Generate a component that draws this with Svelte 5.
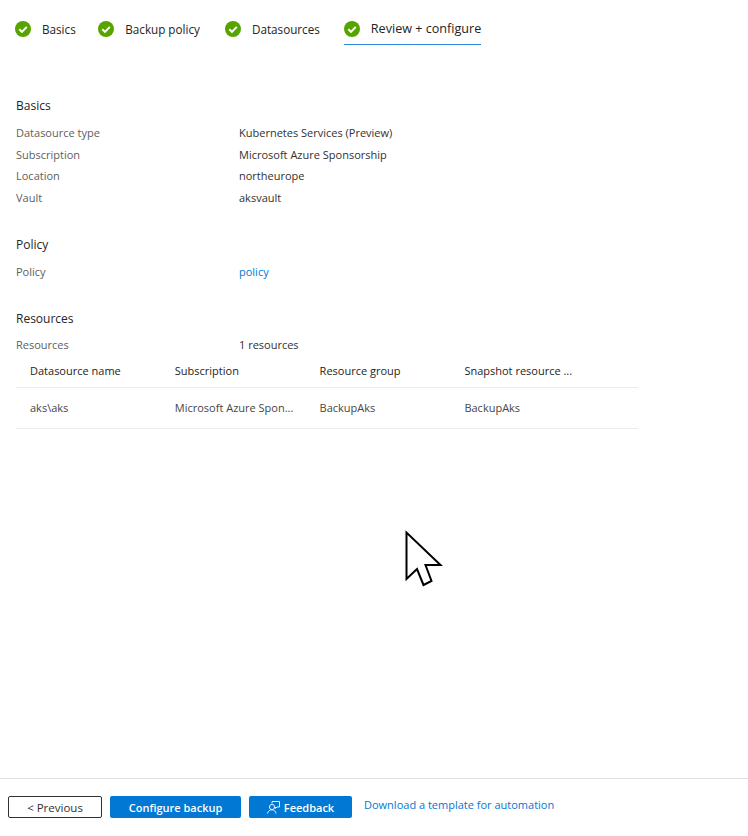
<script>
	const steps = ["Basics", "Backup policy", "Datasources", "Review + configure"];

	const basics = [
		{ label: "Datasource type", value: "Kubernetes Services (Preview)" },
		{ label: "Subscription", value: "Microsoft Azure Sponsorship" },
		{ label: "Location", value: "northeurope" },
		{ label: "Vault", value: "aksvault" }
	];

	const columns = ["Datasource name", "Subscription", "Resource group", "Snapshot resource ..."];
	const cells = ["aks\\aks", "Microsoft Azure Spon...", "BackupAks", "BackupAks"];
</script>

<div class="page">
	<nav class="steps">
		{#each steps as step, i}
			<div class="step" class:active={i === steps.length - 1}>
				<svg class="check" width="16" height="16" viewBox="0 0 16 16">
					<circle cx="8" cy="8" r="8" fill="#57a300" />
					<path d="M4.3 8.2 7 10.9 11.8 5.9" fill="none" stroke="#fff" stroke-width="2" />
				</svg>
				<span>{step}</span>
			</div>
		{/each}
	</nav>

	<main class="summary">
		<section class="basics">
			<h2>Basics</h2>
			{#each basics as row}
				<div class="row">
					<span class="label">{row.label}</span>
					<span class="value">{row.value}</span>
				</div>
			{/each}
		</section>

		<section class="policy">
			<h2>Policy</h2>
			<div class="row">
				<span class="label">Policy</span>
				<a class="link" href="#policy">policy</a>
			</div>
		</section>

		<section class="resources">
			<h2>Resources</h2>
			<div class="row">
				<span class="label">Resources</span>
				<span class="value">1 resources</span>
			</div>
			<div class="table">
				<div class="thead">
					{#each columns as col}
						<span>{col}</span>
					{/each}
				</div>
				<div class="tbody">
					{#each cells as cell}
						<span>{cell}</span>
					{/each}
				</div>
			</div>
		</section>
	</main>

	<svg class="cursor" width="38" height="58" viewBox="0 0 38 58">
		<path d="M1.5 2.500V49L12 39 18.500 55 26.500 51 20.500 35H35.500Z" fill="#fff" stroke="#000" stroke-width="2" />
	</svg>

	<footer class="actions">
		<button class="btn outline">&lt; Previous</button>
		<button class="btn primary configure">Configure backup</button>
		<button class="btn primary feedback">
			<svg width="13" height="13" viewBox="0 0 13 13" fill="none" stroke="#fff" stroke-width="0.9">
				<circle cx="5" cy="6" r="2.6" />
				<path d="M0.5 12.500C1 10 3 8.800 5 8.800S8.500 10 9 12.500" />
				<path d="M5 2.500V0.500H12.500V6H10L8.500 7.500V6" />
			</svg>
			Feedback
		</button>
		<a class="link download" href="#template">Download a template for automation</a>
	</footer>
</div>

<style>
	:global(body) {
		background: #fff;
	}

	.page {
		position: relative;
		width: 748px;
		height: 836px;
		display: flex;
		flex-direction: column;
		font-family: "Open Sans", "Noto Sans", sans-serif;
		font-size: 11px;
		color: #323130;
		overflow: hidden;
	}

	.steps {
		display: flex;
		gap: 22.5px;
		padding: 13px 0 0 15px;
		height: 32px;
		font-size: 11.7px;
	}

	.step {
		display: flex;
		align-items: center;
		gap: 11px;
		height: 31px;
		box-sizing: border-box;
		color: #252423;
	}

	.step:nth-child(3) {
		margin-left: 2.5px;
	}

	.step:nth-child(4) {
		margin-left: 1.5px;
	}

	.step.active {
		border-bottom: 1px solid #2b88d8;
		font-size: 12.6px;
		font-weight: 500;
		height: 32px;
	}

	.summary {
		flex: 1;
		padding: 52px 0 0 16px;
	}

	section {
		width: 622px;
	}

	.policy {
		margin-top: 27px;
	}

	.resources {
		margin-top: 28px;
	}

	h2 {
		margin: 0 0 7px;
		font-size: 12px;
		line-height: 18px;
		font-weight: 500;
		color: #252423;
	}

	.resources h2 {
		margin-bottom: 6px;
	}

	.row {
		display: grid;
		grid-template-columns: 223px 1fr;
		height: 21.67px;
		line-height: 21.67px;
	}

	.label {
		color: #605e5c;
	}

	.link {
		color: #0078d4;
		text-decoration: none;
	}

	.thead,
	.tbody {
		display: grid;
		grid-template-columns: repeat(4, 144.8px);
		padding-left: 14px;
		border-bottom: 1px solid #edebe9;
	}

	.thead {
		height: 31px;
		line-height: 30px;
		font-weight: 500;
		color: #252423;
	}

	.tbody {
		height: 40px;
		line-height: 40px;
		color: #484644;
	}

	.cursor {
		position: absolute;
		left: 405px;
		top: 530px;
	}

	.actions {
		display: flex;
		align-items: center;
		gap: 8px;
		height: 56px;
		padding: 0 0 0 8px;
		border-top: 1px solid #e1dfdd;
		margin-bottom: 1px;
	}

	.btn {
		height: 22px;
		padding: 0;
		border-radius: 2px;
		font: inherit;
		font-weight: 600;
		display: flex;
		align-items: center;
		justify-content: center;
		gap: 4px;
	}

	.outline {
		width: 94px;
		background: #fff;
		border: 1px solid #323130;
		color: #323130;
		font-size: 11.5px;
		font-weight: 500;
	}

	.primary {
		background: #0078d4;
		border: none;
		color: #fff;
	}

	.configure {
		width: 131px;
	}

	.feedback {
		width: 103px;
	}

	.download {
		margin: -6px 0 0 4px;
	}
</style>
